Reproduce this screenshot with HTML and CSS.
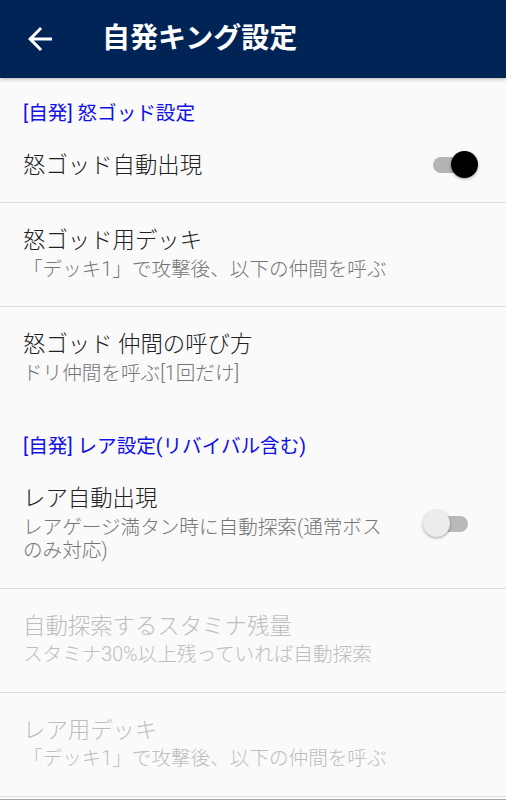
FILE: index.html
```html
<!DOCTYPE html>
<html lang="ja">
<head>
<meta charset="utf-8">
<title>自発キング設定</title>
<link rel="stylesheet" href="styles.css">
</head>
<body>
<header class="toolbar">
  <span class="back">
    <svg viewBox="0 0 24 24" width="36" height="36"><path d="M20 11H7.83l5.59-5.59L12 4l-8 8 8 8 1.41-1.41L7.83 13H20v-2z" fill="#ffffff"/></svg>
  </span>
  <h1 class="title">自発キング設定</h1>
</header>
<main class="list">
  <div class="category">[自発] 怒ゴッド設定</div>
  <div class="pref">
    <div class="pref-text">
      <div class="pref-title">怒ゴッド自動出現</div>
    </div>
    <div class="switch on"><span class="track"></span><span class="thumb"></span></div>
  </div>
  <div class="pref">
    <div class="pref-text">
      <div class="pref-title">怒ゴッド用デッキ</div>
      <div class="pref-summary">「デッキ1」で攻撃後、以下の仲間を呼ぶ</div>
    </div>
  </div>
  <div class="pref no-divider">
    <div class="pref-text">
      <div class="pref-title">怒ゴッド 仲間の呼び方</div>
      <div class="pref-summary">ドリ仲間を呼ぶ[1回だけ]</div>
    </div>
  </div>
  <div class="category">[自発] レア設定(リバイバル含む)</div>
  <div class="pref">
    <div class="pref-text">
      <div class="pref-title">レア自動出現</div>
      <div class="pref-summary">レアゲージ満タン時に自動探索(通常ボスのみ対応)</div>
    </div>
    <div class="switch off"><span class="track"></span><span class="thumb"></span></div>
  </div>
  <div class="pref disabled">
    <div class="pref-text">
      <div class="pref-title">自動探索するスタミナ残量</div>
      <div class="pref-summary">スタミナ30%以上残っていれば自動探索</div>
    </div>
  </div>
  <div class="pref disabled">
    <div class="pref-text">
      <div class="pref-title">レア用デッキ</div>
      <div class="pref-summary">「デッキ1」で攻撃後、以下の仲間を呼ぶ</div>
    </div>
  </div>
  <div class="bottom-edge"></div>
</main>
</body>
</html>
```
FILE: styles.css
```css
html, body {
  margin: 0;
  padding: 0;
}
body {
  background: #fafafa;
  font-family: Roboto, "Noto Sans CJK JP", sans-serif;
  width: 506px;
  height: 800px;
  overflow: hidden;
}
.toolbar {
  height: 78px;
  background: #002456;
  display: flex;
  align-items: center;
  box-shadow: 0 1px 4px rgba(0, 0, 0, 0.3);
  position: relative;
  z-index: 1;
}
.back {
  display: flex;
  margin-left: 22px;
}
.title {
  margin: 0 0 0 44px;
  color: #ffffff;
  font-size: 28px;
  font-weight: 700;
  line-height: 34px;
}
.list {
  display: flex;
  flex-direction: column;
}
.category {
  padding: 22px 23px 1px;
  font-size: 19.6px;
  line-height: 27px;
  color: #1111e8;
  font-weight: 400;
}
.pref {
  display: flex;
  align-items: center;
  padding: 24px 27px 25px 23px;
  border-bottom: 1px solid #dcdcdc;
}
.pref:nth-child(2) {
  padding-bottom: 24px;
}
.pref.no-divider {
  border-bottom-color: transparent;
}
.pref-text {
  flex: 1;
  min-width: 0;
}
.pref-title {
  font-size: 22.4px;
  line-height: 26px;
  color: #212121;
  font-weight: 300;
}
.pref-summary {
  font-size: 19.6px;
  line-height: 23.5px;
  margin-top: 4.5px;
  color: #757575;
  font-weight: 300;
}
.pref.disabled .pref-title,
.pref.disabled .pref-summary {
  color: #bdbdbd;
}
.switch {
  flex: none;
  width: 56px;
  height: 26px;
  margin-left: 25px;
  position: relative;
}
.track {
  position: absolute;
  left: 10px;
  top: 5px;
  width: 35px;
  height: 16px;
  border-radius: 8px;
}
.thumb {
  position: absolute;
  top: -1px;
  width: 27px;
  height: 27px;
  border-radius: 50%;
  box-shadow: 0 1px 3px rgba(0, 0, 0, 0.35);
}
.switch.on .track {
  background: #b4b4b4;
}
.switch.on .thumb {
  left: 28px;
  background: #000000;
}
.switch.off .track {
  background: #b9b9b9;
}
.switch.off .thumb {
  left: 0;
  background: #ececec;
}
.bottom-edge {
  height: 2px;
  margin-top: 2px;
  background: #a6a6a6;
}
```
